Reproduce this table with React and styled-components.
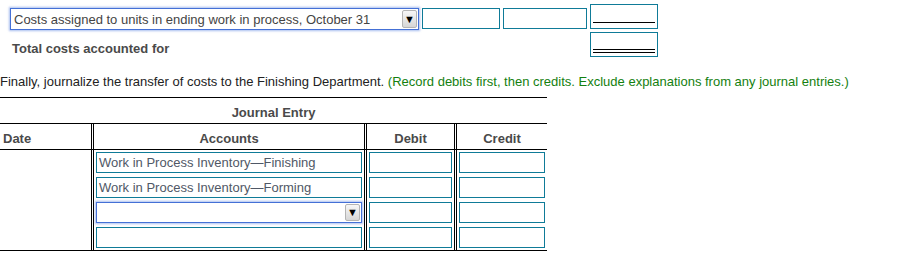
import React from "react";
import styled, { createGlobalStyle } from "styled-components";

const GlobalStyle = createGlobalStyle`
  body {
    margin: 0;
    background: #ffffff;
    font-family: "Liberation Sans", Arial, sans-serif;
    font-size: 13px;
    color: #222222;
  }
  * {
    box-sizing: border-box;
  }
`;

const teal = "#0f7b98";

const Page = styled.div`
  width: 906px;
  height: 264px;
  overflow: hidden;
`;

const Summary = styled.div`
  display: grid;
  grid-template-columns: 409px 78px 84px 68px;
  grid-template-rows: 25px 25px;
  column-gap: 3px;
  row-gap: 3px;
  padding: 4px 0 0 10px;
  align-items: end;
`;

const SelectBox = styled.div`
  position: relative;
  display: flex;
  align-items: center;
  height: 22px;
  margin-bottom: -1px;
  border: 1px solid #4470d6;
  box-shadow: 0 0 2px 1px rgba(98, 136, 226, 0.55);
  background: #ffffff;
  color: #444444;
  padding-left: 3px;
  white-space: nowrap;
`;

const Arrow = styled.span`
  position: absolute;
  right: 1px;
  top: 1px;
  bottom: 1px;
  width: 15px;
  display: flex;
  align-items: center;
  justify-content: center;
  background: linear-gradient(#f7f7f7, #d6d6d6);
  border: 1px solid #b4b4b4;
  border-radius: 2px;
  font-size: 11px;
  line-height: 1;
  color: #000000;
`;

const Field = styled.div`
  height: 21px;
  border: 1px solid ${teal};
  background: #ffffff;
  color: #4d5560;
  padding-left: 2px;
  line-height: 19px;
  white-space: nowrap;
  overflow: hidden;
`;

const TotalBox = styled.div`
  grid-column: ${(p) => p.$col};
  height: 25px;
  border: 1px solid ${teal};
  padding: 0 2px ${(p) => (p.$double ? "3px" : "5px")};
  display: flex;
  align-items: flex-end;
`;

const Rule = styled.div`
  width: 100%;
  border-bottom: ${(p) => (p.$double ? "4px double #000" : "1px solid #000")};
`;

const TotalLabel = styled.div`
  grid-column: 1 / 4;
  font-weight: bold;
  color: #4a4a4a;
  line-height: 15px;
  padding-left: 2px;
  margin-bottom: 1px;
`;

const Instruction = styled.p`
  margin: 17px 0 7px 0;
  line-height: 16px;
  color: #222222;
`;

const Hint = styled.span`
  color: #14800f;
`;

const Journal = styled.table`
  width: 547px;
  table-layout: fixed;
  border-collapse: separate;
  border-spacing: 0;
  border-top: 1px solid #000;
  border-bottom: 1px solid #000;
`;

const Title = styled.th`
  height: 26px;
  border-bottom: 1px solid #000;
  font-weight: bold;
  color: #4a4a4a;
  text-align: center;
  padding: 3px 0 0;
`;

const Head = styled.th`
  height: 26px;
  border-bottom: 1px solid #000;
  border-left: ${(p) => (p.$first ? "none" : "3px double #000")};
  font-weight: bold;
  color: #4a4a4a;
  text-align: ${(p) => (p.$first ? "left" : "center")};
  padding: 3px 0 0 ${(p) => (p.$first ? "3px" : "0")};
`;

const Cell = styled.td`
  height: 25px;
  border-left: ${(p) => (p.$first ? "none" : "3px double #000")};
  padding: 2px;
  vertical-align: top;
`;

const RowSelect = styled(SelectBox)`
  height: 21px;
  margin: 0;
`;

const Account = styled(Field)`
  color: #505866;
`;

const accounts = [
  "Work in Process Inventory\u2014Finishing",
  "Work in Process Inventory\u2014Forming",
  null,
  "",
];

export default function App() {
  return (
    <Page>
      <GlobalStyle />
      <Summary>
        <SelectBox>
          Costs assigned to units in ending work in process, October 31
          <Arrow>▼</Arrow>
        </SelectBox>
        <Field />
        <Field />
        <TotalBox $col="4">
          <Rule />
        </TotalBox>
        <TotalLabel>Total costs accounted for</TotalLabel>
        <TotalBox $col="4" $double>
          <Rule $double />
        </TotalBox>
      </Summary>

      <Instruction>
        Finally, journalize the transfer of costs to the Finishing Department.{" "}
        <Hint>
          (Record debits first, then credits. Exclude explanations from any
          journal entries.)
        </Hint>
      </Instruction>

      <Journal>
        <colgroup>
          <col style={{ width: 91 }} />
          <col style={{ width: 273 }} />
          <col style={{ width: 90 }} />
          <col style={{ width: 93 }} />
        </colgroup>
        <thead>
          <tr>
            <Title colSpan={4}>Journal Entry</Title>
          </tr>
          <tr>
            <Head $first>Date</Head>
            <Head>Accounts</Head>
            <Head>Debit</Head>
            <Head>Credit</Head>
          </tr>
        </thead>
        <tbody>
          {accounts.map((name, i) => (
            <tr key={i}>
              <Cell $first />
              <Cell>
                {name === null ? (
                  <RowSelect>
                    <Arrow>▼</Arrow>
                  </RowSelect>
                ) : (
                  <Account>{name}</Account>
                )}
              </Cell>
              <Cell>
                <Field />
              </Cell>
              <Cell>
                <Field />
              </Cell>
            </tr>
          ))}
        </tbody>
      </Journal>
    </Page>
  );
}
